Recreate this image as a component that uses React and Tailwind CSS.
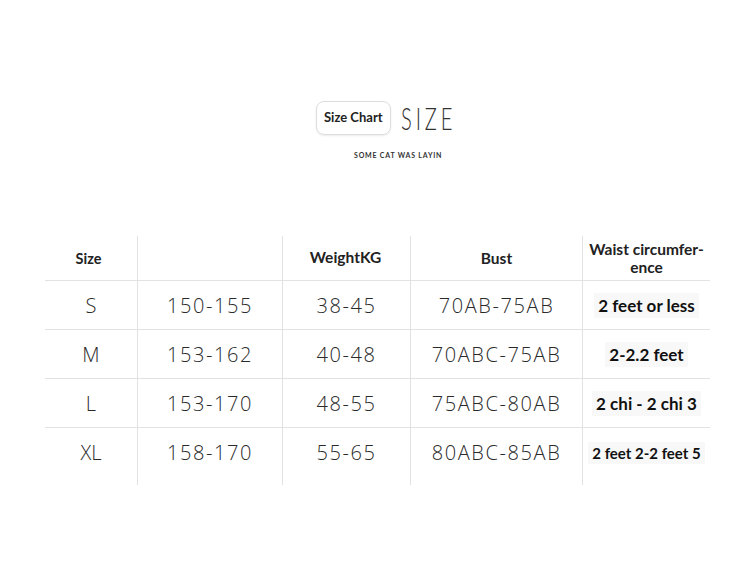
import React from 'react';

const rows = [
    { size: 'S', height: '150-155', weight: '38-45', bust: '70AB-75AB', waist: '2 feet or less' },
    { size: 'M', height: '153-162', weight: '40-48', bust: '70ABC-75AB', waist: '2-2.2 feet' },
    { size: 'L', height: '153-170', weight: '48-55', bust: '75ABC-80AB', waist: '2 chi - 2 chi 3' },
    { size: 'XL', height: '158-170', weight: '55-65', bust: '80ABC-85AB', waist: '2 feet 2-2 feet 5' },
];

const cols = 'grid grid-cols-[92px_145px_128px_172px_128px]';
const num = 'border-l border-[#e2e2e2] flex items-center justify-center text-[20px] font-light tracking-[1.6px] text-[#2a2a2a]';

export default function App() {
    return (
        <div className="w-[750px] h-[580px] bg-white flex flex-col text-[#222]" style={{ fontFamily: 'Lato, "Open Sans", sans-serif' }}>
            {/* Title */}
            <div className="pt-[101px] ml-[316px] flex flex-col">
                <div className="flex items-center gap-[10px]">
                    <div className="h-[34px] px-[7px] flex items-center rounded-[8px] border border-[#ddd] shadow-[0_1px_2px_rgba(0,0,0,0.08)] text-[13px] font-bold text-[#222]">
                        Size Chart
                    </div>
                    <div className="text-[31px] font-light tracking-[6px] text-[#333] leading-none scale-x-[0.65] origin-left">
                        SIZE
                    </div>
                </div>
                <div className="mt-[15px] ml-[38px] text-[7px] font-bold tracking-[0.8px] text-[#333]">
                    SOME CAT WAS LAYIN
                </div>
            </div>

            {/* Table */}
            <div className="mt-[75px] ml-[45px] w-[665px]">
                <div className={`${cols} h-[45px] border-b border-[#e2e2e2] text-[15.5px] font-bold`}>
                    <div className="flex items-center justify-center pt-[2px] pr-[5px] text-[14.5px]">Size</div>
                    <div className="border-l border-[#e2e2e2]" />
                    <div className="border-l border-[#e2e2e2] flex items-center justify-center pr-[2px]">WeightKG</div>
                    <div className="border-l border-[#e2e2e2] flex items-center justify-center pt-[2px]">Bust</div>
                    <div className="border-l border-[#e2e2e2] flex items-center justify-center text-center leading-[18px] px-[2px]">
                        Waist circumfer-<br />ence
                    </div>
                </div>
                {rows.map((r, i) => (
                    <div key={r.size} className={`${cols} ${i < rows.length - 1 ? 'h-[49px] border-b border-[#e2e2e2] [&>div]:pt-[2px]' : 'h-[57px] [&>div]:pb-[6px]'}`} style={{ fontFamily: '"Open Sans", sans-serif' }}>
                        <div className="flex items-center justify-center text-[20px] font-light text-[#2a2a2a]">{r.size}</div>
                        <div className={num}>{r.height}</div>
                        <div className={num}>{r.weight}</div>
                        <div className={num}>{r.bust}</div>
                        <div className="border-l border-[#e2e2e2] flex items-center justify-center" style={{ fontFamily: 'Lato, sans-serif' }}>
                            <span className={`bg-[#f8f8f8] px-[4px] font-bold text-[#111] ${i === 3 ? 'text-[15px]' : 'text-[17px]'}`}>{r.waist}</span>
                        </div>
                    </div>
                ))}
            </div>
        </div>
    );
}
